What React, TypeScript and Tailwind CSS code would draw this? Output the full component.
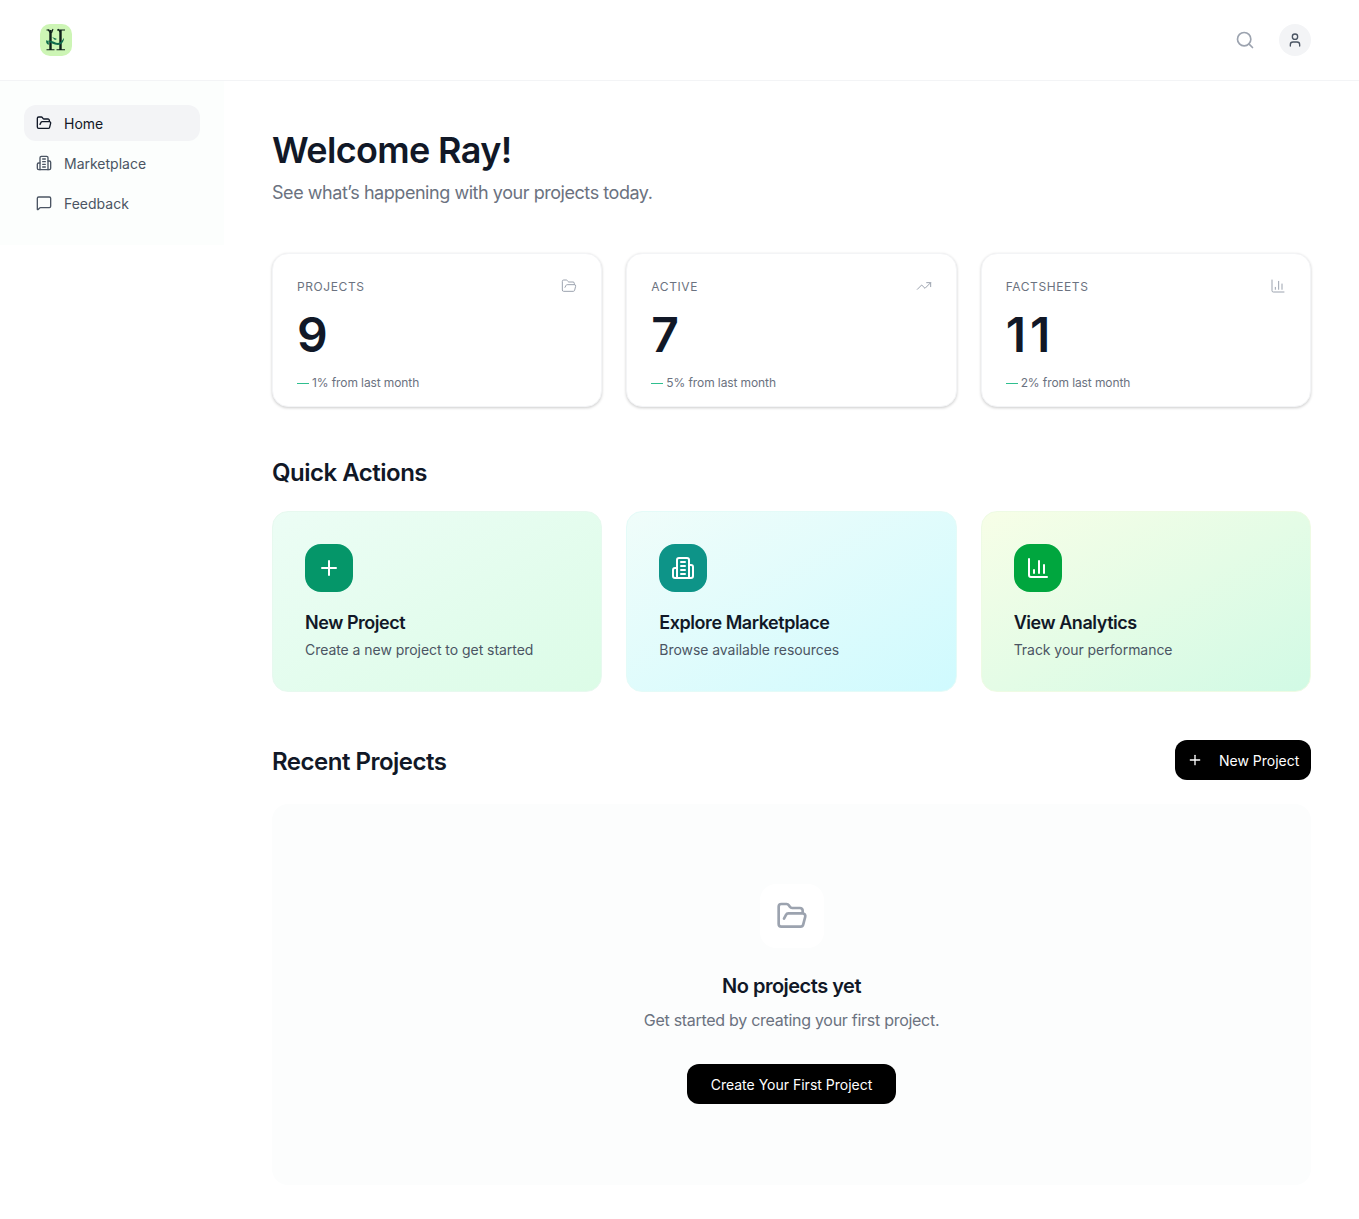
import { BarChart3, FolderOpen, MessageSquare, Plus, Search, TrendingUp, User } from "lucide-react";

function BuildingIcon({ className, strokeWidth = 2 }: { className?: string; strokeWidth?: number }) {
  return (
    <svg
      xmlns="http://www.w3.org/2000/svg"
      viewBox="0 0 24 24"
      fill="none"
      stroke="currentColor"
      strokeWidth={strokeWidth}
      strokeLinecap="round"
      strokeLinejoin="round"
      className={className}
    >
      <path d="M6 22V4a2 2 0 0 1 2-2h8a2 2 0 0 1 2 2v18Z"></path>
      <path d="M6 12H4a2 2 0 0 0-2 2v6a2 2 0 0 0 2 2h2"></path>
      <path d="M18 9h2a2 2 0 0 1 2 2v9a2 2 0 0 1-2 2h-2"></path>
      <path d="M10 6h4"></path>
      <path d="M10 10h4"></path>
      <path d="M10 14h4"></path>
      <path d="M10 18h4"></path>
    </svg>
  );
}

function Logo() {
  return (
    <div className="w-8 h-8 rounded-[10px] bg-[#cdf5b5] flex items-center justify-center">
      <svg viewBox="0 0 32 32" className="w-8 h-8">
        <g stroke="#0d1f1a" fill="none">
          <path d="M10.5 6v20M20.5 6v20" strokeWidth="2.4" />
          <path d="M6.5 25.8h8M16.5 25.8h8.5M6.5 6h3M17 6h8" strokeWidth="1.1" />
          <path d="M13 5l-1.5 4M8 5.5l2 3M18 5l2 3" strokeWidth="1.1" />
        </g>
        <path d="M7 17c4-2 8 2 11 2s4-3 6-5c0 4-3 7-6 7-4 0-8-3-11-4Z" fill="#0f6b4c" />
        <path d="M6.5 16c2 1 3 3 2 5-2-1-3-3-2-5ZM12 13l5 2-2 1-3-3Z" fill="#0f6b4c" />
      </svg>
    </div>
  );
}

const stats = [
  { label: "PROJECTS", value: "9", change: "1% from last month", Icon: FolderOpen },
  { label: "ACTIVE", value: "7", change: "5% from last month", Icon: TrendingUp },
  { label: "FACTSHEETS", value: "11", change: "2% from last month", Icon: BarChart3 },
];

function NavItem({ label, active, children }: { label: string; active?: boolean; children: React.ReactNode }) {
  return (
    <div
      className={
        active
          ? "h-9 px-3 flex items-center gap-3 rounded-xl bg-[#f3f4f6] text-[#111827] text-sm"
          : "h-9 px-3 flex items-center gap-3 rounded-xl text-[#4b5563] text-sm"
      }
    >
      {children}
      <span className="pt-0.5">{label}</span>
    </div>
  );
}

export default function App() {
  return (
    <div className="min-h-[1219px] bg-white font-['Inter',sans-serif]">
      <header className="h-[81px] border-b border-[#f3f4f6] pl-10 pr-12 flex items-center justify-between">
        <Logo />
        <div className="flex items-center gap-3.5">
          <div className="w-10 h-10 flex items-center justify-center">
            <Search className="w-5 h-5 text-[#9ca3af]" />
          </div>
          <div className="w-8 h-8 rounded-full bg-[#f3f4f6] flex items-center justify-center">
            <User className="w-4 h-4 text-[#4b5563]" />
          </div>
        </div>
      </header>

      <div className="flex items-start">
        <aside className="w-56 shrink-0 bg-[#fcfefd] px-6 pt-6 pb-4 h-[164px] flex flex-col gap-1">
          <NavItem label="Home" active>
            <FolderOpen className="w-4 h-4" />
          </NavItem>
          <NavItem label="Marketplace">
            <BuildingIcon className="w-4 h-4" />
          </NavItem>
          <NavItem label="Feedback">
            <MessageSquare className="w-4 h-4" />
          </NavItem>
        </aside>

        <main className="flex-1 min-w-0 pl-12 pr-12 pt-[49px]">
          <h1 className="text-4xl font-semibold text-[#111827] leading-10 tracking-[-0.65px]">Welcome Ray!</h1>
          <p className="mt-[9px] text-lg leading-7 tracking-tight text-[#6b7280]">See what’s happening with your projects today.</p>

          <div className="mt-[46px] grid grid-cols-3 gap-6">
            {stats.map(({ label, value, change, Icon }) => (
              <div
                key={label}
                className="h-[154px] rounded-2xl border border-[#f3f4f6] bg-white shadow-[0_1px_3px_rgba(0,0,0,0.2)] px-6 pt-6"
              >
                <div className="flex items-start justify-between">
                  <span className="text-xs leading-4 mt-px font-normal tracking-wider text-[#6b7280]">{label}</span>
                  <Icon className="w-4 h-4 text-[#9ca3af]" strokeWidth={1.5} />
                </div>
                <div className="mt-4 text-5xl leading-12 font-semibold tracking-[4px] text-[#111827]">{value}</div>
                <div className="mt-4 flex items-center gap-[3px] text-xs leading-4 tracking-[-0.1px] text-[#6b7280]">
                  <span className="w-3 h-[2px] border-b border-[#2fbf8f]" />
                  <span>{change}</span>
                </div>
              </div>
            ))}
          </div>

          <h2 className="mt-[50px] text-2xl leading-8 font-semibold tracking-[-0.5px] text-[#111827]">Quick Actions</h2>

          <div className="mt-[22px] grid grid-cols-3 gap-6">
            <div className="h-[181px] rounded-2xl border border-[#e7f9ef] bg-gradient-to-br from-[#ecfdf5] to-[#dcfce7] p-8">
              <div className="w-12 h-12 rounded-2xl bg-[#059669] flex items-center justify-center text-white">
                <Plus className="w-6 h-6" />
              </div>
              <div className="mt-[17px] text-lg leading-7 font-semibold tracking-tight text-[#111827]">New Project</div>
              <div className="mt-[3px] text-sm leading-5 tracking-[-0.05px] text-[#4b5563]">Create a new project to get started</div>
            </div>
            <div className="h-[181px] rounded-2xl border border-[#e4fbf8] bg-gradient-to-br from-[#f0fdfa] to-[#cffafe] p-8">
              <div className="w-12 h-12 rounded-2xl bg-[#0d9488] flex items-center justify-center text-white">
                <BuildingIcon className="w-6 h-6" />
              </div>
              <div className="mt-[17px] text-lg leading-7 font-semibold tracking-tight text-[#111827]">Explore Marketplace</div>
              <div className="mt-[3px] text-sm leading-5 tracking-[-0.05px] text-[#4b5563]">Browse available resources</div>
            </div>
            <div className="h-[181px] rounded-2xl border border-[#eefbe4] bg-gradient-to-br from-[#f7fee7] to-[#d1fae5] p-8">
              <div className="w-12 h-12 rounded-2xl bg-[#00a63e] flex items-center justify-center text-white">
                <BarChart3 className="w-6 h-6" />
              </div>
              <div className="mt-[17px] text-lg leading-7 font-semibold tracking-tight text-[#111827]">View Analytics</div>
              <div className="mt-[3px] text-sm leading-5 tracking-[-0.05px] text-[#4b5563]">Track your performance</div>
            </div>
          </div>

          <div className="mt-12 flex items-center justify-between">
            <h2 className="pt-1 text-2xl leading-8 font-semibold tracking-[-0.5px] text-[#111827]">Recent Projects</h2>
            <button className="h-10 w-[136px] rounded-xl bg-black text-white text-sm flex items-center pl-3 gap-4">
              <Plus className="w-4 h-4" />
              <span className="pt-0.5">New Project</span>
            </button>
          </div>

          <div className="mt-6 h-[381px] rounded-2xl bg-[#fcfdfd] flex flex-col items-center pt-20">
            <div className="w-16 h-16 rounded-2xl bg-white flex items-center justify-center">
              <FolderOpen className="w-8 h-8 text-[#9ca3af]" />
            </div>
            <div className="mt-6 text-xl leading-7 font-semibold tracking-tight text-[#111827]">No projects yet</div>
            <div className="mt-2 text-base leading-6 tracking-[-0.28px] text-[#6b7280]">Get started by creating your first project.</div>
            <button className="mt-8 h-10 px-6 pt-0.5 rounded-xl bg-black text-white text-sm">Create Your First Project</button>
          </div>
        </main>
      </div>
    </div>
  );
}
